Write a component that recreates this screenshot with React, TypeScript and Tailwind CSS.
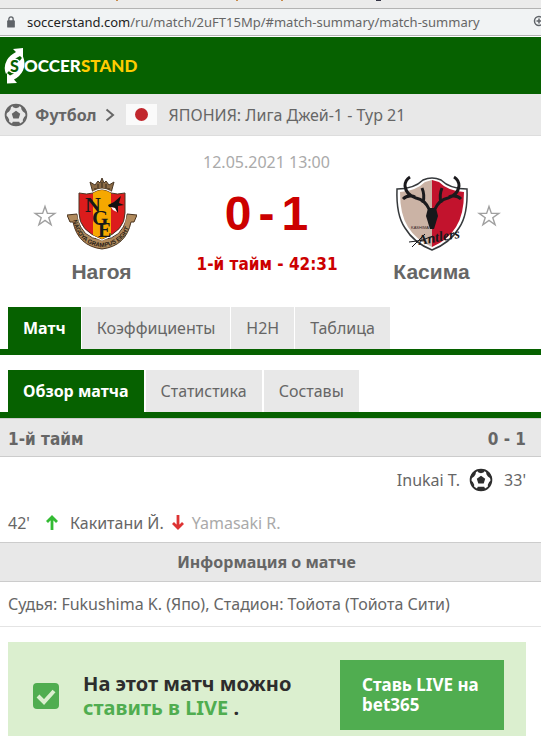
import React from "react";

const ui = "font-['Noto_Sans',sans-serif]";
const wide = "font-['DejaVu_Sans_Condensed','DejaVu_Sans',sans-serif]";

function Ball({ className }: { className: string }) {
  return (
    <svg viewBox="0 0 24 24" className={className} aria-hidden="true">
      <circle cx="12" cy="12" r="10.4" fill="none" stroke="currentColor" strokeWidth="1.8" />
      <path fill="currentColor" d="M12 7.800l4.200 2.900-1.500 4.700H9.300l-1.500-4.700z" />
      <path fill="currentColor" d="M7.500 1.800h9l-2 2.600L12 5.200 9.500 4.400zM1.300 9L3.800 4.500l3.200-1.500-.4 3.300-1.500 2.200-2.400 1.700zM22.700 9l-2.500-4.500L17 3l.4 3.300 1.500 2.200 2.400 1.700zM1.200 12.500l2.500 1.200 1.500 3-.2 3.300zM22.800 12.500l-2.500 1.200-1.500 3 .2 3.300zM8.800 18.700h6.400l1.200 2.500-2.400 1.900h-4l-2.400-1.900z" />
    </svg>
  );
}

function Star({ team }: { team: string }) {
  return (
    <button aria-label={team} className="h-6 w-6 shrink-0 text-[#a0a0a0]">
      <svg viewBox="0 0 24 24" className="h-6 w-6" fill="none" stroke="currentColor" strokeWidth="1.4">
        <path d="M12 2.400l2.400 7h7.400l-6 4.300 2.300 7.100-6.100-4.400-6.100 4.400 2.300-7.100-6-4.300h7.400z" />
      </svg>
    </button>
  );
}

function Logo() {
  return (
    <svg viewBox="0 0 136 38" className="h-[38px] w-[136px]" role="img" aria-label="SoccerStand">
      <path fill="#fff" d="M9 2L19 1v11l-3-3Q9 12 6 18l-1 6-3 3Q-1 20 3 13 6 8 12 5zM13 36L3 36.500V26l3 2.500q7-3 9-9l1-6 3-4q3 7 0 14-3 6-9 9z" />
      <circle cx="10.500" cy="19" r="7.500" fill="#fff" />
      <text x="6" y="25" fontFamily="Lato" fontWeight="900" fontSize="16" fill="#066100">S</text>
      <text x="20" y="25" fontFamily="Lato" fontWeight="900" fontSize="17" fill="#fff">OCCER</text>
      <text x="77" y="25" fontFamily="Lato" fontWeight="900" fontSize="17" fill="#fc0">STAND</text>
    </svg>
  );
}

function NagoyaCrest() {
  return (
    <svg viewBox="0 0 70 74" className="h-[74px] w-[70px]" role="img" aria-label="Нагоя">
      <path d="M23 6l5 3 3-4 2 2 2-5 2 5 2-2 3 4 5-3-3 11H26z" fill="#8b6a45" stroke="#4a3826" />
      <path d="M27 13h16M31 8v4M35 6v6M39 8v4" stroke="#33261a" fill="none" />
      <path d="M0 39l10-1 1 4q3 20 24 22 21-2 24-22l1-4 10 1-3 7h-3q-5 24-29 27Q11 70 6 46H3z" fill="#b08a5c" stroke="#49331f" />
      <path d="M12 17q8 2 14 0 5-3 9-3t9 3q6 2 14 0v20q0 18-23 26Q12 55 12 37z" fill="#dc1c1c" stroke="#fff" strokeWidth="3" />
      <path d="M12 17q8 2 14 0 5-3 9-3t9 3q6 2 14 0v20q0 18-23 26Q12 55 12 37z" fill="#dc1c1c" stroke="#4a3423" />
      <path d="M26 17q5-3 9-3t9 3v42l-9 4-9-4z" fill="#f6a800" />
      <path id="ribbon" d="M6 44q5 25 29 27 24-2 29-27" fill="none" />
      <text fontFamily="Liberation Sans" fontWeight="700" fontSize="6" fill="#251b14">
        <textPath href="#ribbon">NAGOYA GRAMPUS EIGHT</textPath>
      </text>
      <g fontFamily="Liberation Serif" fontWeight="700" fill="#17191a">
        <text x="18" y="36" fontSize="22">N</text>
        <text x="25" y="49" fontSize="21">G</text>
        <text x="31" y="61" fontSize="20">E</text>
      </g>
      <path d="M41 29l6-3 7-6-2 7 5 2-6 1v7l-3-5-6-1z" fill="#111" />
      <path d="M44 31l4 1 2 4-4-2z" fill="#fff" />
    </svg>
  );
}

function KashimaCrest() {
  return (
    <svg viewBox="0 0 76 76" className="h-[76px] w-[76px]" role="img" aria-label="Касима">
      <path d="M3 14q17 0 26-9 9-4 18 0 9 9 26 9 1 26-8 39-9 15-27 22-18-7-27-22Q2 40 3 14z" fill="#fff" stroke="#36393c" strokeWidth="1.500" />
      <path d="M6 17q16-1 25-10l7-2v67q-16-7-24-20Q6 40 6 17z" fill="#cbb3a5" />
      <path d="M38 5l7 2q9 9 25 10 0 23-8 35-8 13-24 20z" fill="#c2132d" />
      <path d="M35 34Q31 25 22 23 12 20 11 11q0-6 5-9M41 34q4-9 13-11 10-3 11-12 0-6-5-9M29 28q2-8-1-15M21 22q-7-3-12 2M47 28q-2-8 1-15M55 22q7-3 12 2" fill="none" stroke="#1b1a1d" strokeWidth="3" />
      <path d="M34 33h8l2 8-4 13h-4l-4-13z" fill="#17181b" />
      <text x="17" y="54" fontFamily="Liberation Sans" fontSize="4" fill="#322">KASHIMA</text>
      <text x="25" y="70" fontFamily="Liberation Serif" fontStyle="italic" fontWeight="700" fontSize="14" fill="#17181b" transform="rotate(-10 25 70)">Antlers</text>
      <path d="M15 67q12 0 24-6M18 72l13-13" stroke="#17181b" fill="none" />
    </svg>
  );
}

function Tabs({ items, label, gap }: { items: string[]; label: string; gap: string }) {
  return (
    <nav aria-label={label} className={`flex border-b-[6px] border-[#066100] px-2 ${gap}`}>
      {items.map((item, i) => (
        <button key={item} className={i === 0 ? "h-[42px] bg-[#066100] px-[15px] font-bold text-white" : "h-[42px] bg-[#e8e8e8] px-[15px]"}>
          {item}
        </button>
      ))}
    </nav>
  );
}

function Team({ name, crest }: { name: string; crest: React.ReactNode }) {
  return (
    <div className="flex w-20 flex-col items-center">
      <div className="flex h-[78px] items-center">{crest}</div>
      <a href="#team" className="mt-2 font-['Liberation_Sans',sans-serif] text-[21px] leading-6 font-bold">{name}</a>
    </div>
  );
}

export default function App() {
  return (
    <div className={`${ui} bg-white text-[16px] leading-6 text-[#666]`}>
      <div className="h-2 overflow-hidden bg-[#ebebeb]">
        <svg viewBox="0 0 541 8" className="h-2 w-[541px]" aria-hidden="true">
          <path d="M116 0h2v1h-2zM236 0h2v1h-2zM281 0h2v1h-2z" fill="#c98a4a" />
          <path d="M376 0h5v1h-5z" fill="#334" />
        </svg>
      </div>
      <div className="flex h-7 items-center overflow-hidden border-y border-[#b3b3b3] bg-[#f1f3f4] pl-1.5 text-[13px]">
        <svg viewBox="0 0 10 14" className="h-3 w-2.5 shrink-0" aria-hidden="true">
          <path d="M2.500 6V3.500a2.500 2.500 0 015 0V6" fill="none" stroke="#5f6368" strokeWidth="1.500" />
          <rect x="0.500" y="5" width="9" height="8.500" rx="1" fill="#5f6368" />
        </svg>
        <span className="ml-[11px] grow whitespace-nowrap text-[#666]"><span className="text-[#222]">soccerstand.com</span>/ru/match/2uFT15Mp/#match-summary/match-summary</span>
        <svg viewBox="0 0 8 12" className="mb-0.5 h-3 w-2 shrink-0" fill="none" stroke="#5f6368" strokeWidth="1.500" aria-hidden="true">
          <circle cx="6" cy="6" r="4.500" />
          <path d="M3.500 6H8M6 3.500v5" />
        </svg>
      </div>
      <header className="mt-px flex h-[57px] items-center bg-[#066100] pl-1"><Logo /></header>
      <div className="flex h-[42px] items-center border-b border-[#ddd] bg-[#e8e8e8] pl-1">
        <Ball className="h-6 w-6" />
        <a href="#football" className="ml-[7px] font-bold">Футбол</a>
        <svg viewBox="0 0 10 14" className="ml-2 h-3.5 w-2.5" fill="none" stroke="currentColor" strokeWidth="2"><path d="M1.500 1.500L8 7l-6.500 5.500" /></svg>
        <span className="ml-[11px] flex h-[21px] w-[31px] items-center justify-center bg-[#fafafa]"><span className="h-[13px] w-[13px] rounded-full bg-[#c1272d]" /></span>
        <a href="#league" className="ml-3">ЯПОНИЯ: Лига Джей-1 - Тур 21</a>
      </div>
      <main>
        <section className="grid h-[171px] grid-cols-[1fr_140px_1fr] pt-3.5 pr-2">
          <div className="flex justify-end gap-[5px] pt-6 pr-[55px]">
            <div className="pt-[30px]"><Star team="Нагоя" /></div>
            <Team name="Нагоя" crest={<NagoyaCrest />} />
          </div>
          <div className="text-center">
            <div className="text-[#aaa]">12.05.2021 13:00</div>
            <div className="mt-3.5 flex justify-center gap-[7px] font-['Liberation_Sans',sans-serif] text-[48px] leading-[52px] font-bold text-[#c00]">
              <span>0</span><span>-</span><span>1</span>
            </div>
            <div className={`${wide} mt-3 text-[17px] font-bold whitespace-nowrap text-[#c00]`}>1-й тайм - 42:31</div>
          </div>
          <div className="flex gap-[5px] pt-6 pl-[55px]">
            <Team name="Касима" crest={<KashimaCrest />} />
            <div className="pt-[30px]"><Star team="Касима" /></div>
          </div>
        </section>
        <Tabs label="Матч" gap="gap-px" items={["Матч", "Коэффициенты", "H2H", "Таблица"]} />
        <div className="mt-[15px]"><Tabs label="Обзор" gap="gap-0.5" items={["Обзор матча", "Статистика", "Составы"]} /></div>
        <h2 className={`${wide} flex h-[39px] items-center justify-between border-y border-[#ccc] bg-[#e8e8e8] pt-0.5 pr-[15px] pl-2 text-[17px] font-bold`}><span>1-й тайм</span><span>0 - 1</span></h2>
        <div className="flex h-[46px] items-center justify-end pr-[15px]">
          <a href="#inukai">Inukai T.</a><Ball className="mr-[11px] ml-[9px] h-6 w-6 text-[#2d2d2d]" /><span>33'</span>
        </div>
        <div className="flex h-[39px] items-center pl-2">
          <span>42'</span>
          <svg viewBox="0 0 12 15" className="ml-4 h-[15px] w-3" stroke="#3b3" fill="none" strokeWidth="2.800"><path d="M6 15V2M1 7l5-5 5 5" /></svg>
          <a href="#kakitani" className="ml-3">Какитани Й.</a>
          <svg viewBox="0 0 12 15" className="ml-2 h-[15px] w-3" stroke="#d33" fill="none" strokeWidth="2.800"><path d="M6 0v13M1 8l5 5 5-5" /></svg>
          <a href="#yamasaki" className="ml-2 text-[#aaa]">Yamasaki R.</a>
        </div>
        <h2 className="flex h-10 items-center justify-center border-y border-[#ccc] bg-[#e8e8e8] pr-2 font-bold">Информация о матче</h2>
        <p className="flex h-[45px] items-center border-b border-[#e4e4e4] px-2">Судья: Fukushima K. (Япо), Стадион: Тойота (Тойота Сити)</p>
        <section className="mt-[15px] mr-[15px] ml-2 flex h-[94px] items-start bg-[#dbefcf] pt-[18px] pr-[22px] pl-[25px]">
          <svg viewBox="0 0 26 26" className="mt-[23px] h-[26px] w-[26px]"><rect width="26" height="26" rx="4" fill="#50ad50" /><path d="M5 13l6 6L21 8" fill="none" stroke="#dbefcf" strokeWidth="4" /></svg>
          <p className="mt-3 ml-6 grow text-[20px] font-bold text-[#2d2d2d]">На этот матч можно<br /><a href="#live" className="text-[#50ad50]">ставить в LIVE</a> .</p>
          <button className="h-[70px] w-[164px] bg-[#50ad50] pr-4 pl-[22px] text-left text-[17px] leading-5 font-bold text-white">Ставь LIVE на bet365</button>
        </section>
      </main>
    </div>
  );
}
